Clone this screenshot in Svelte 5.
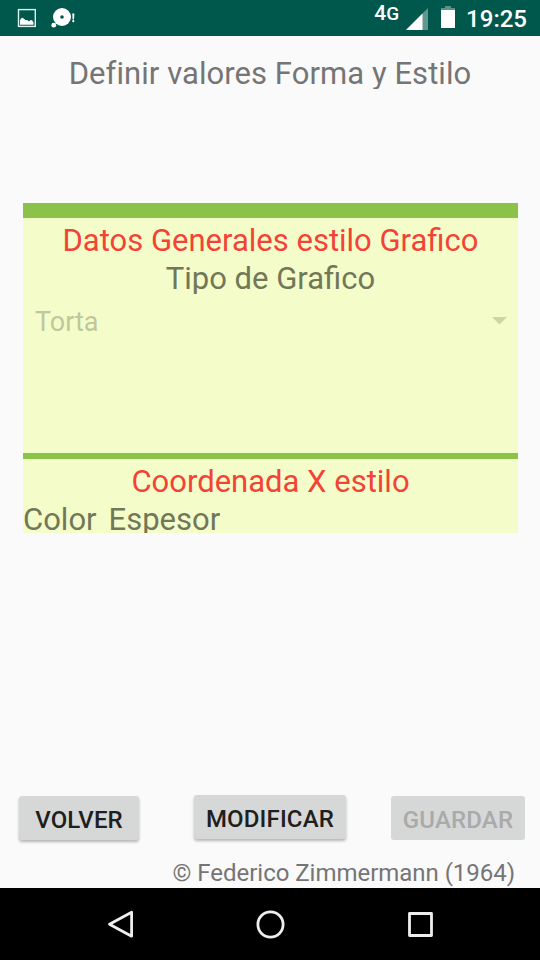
<script>
  let tipo = "Torta"

  const columnas = ["Color", "Espesor"]

  const botones = [
    { id: "volver", texto: "Volver" },
    { id: "modificar", texto: "Modificar" },
    { id: "guardar", texto: "Guardar", inactivo: true },
  ]
</script>

<div class="screen">
  <header class="status">
    <svg class="notifications" width="80" height="36" viewBox="0 0 80 36">
      <rect x="18.5" y="9.6" width="16.8" height="16.8" fill="none" stroke="#d9f5ee" stroke-width="1.4" />
      <path d="M20 24.7v-4.2l1-2 1.6-.7 1.6 1.2 1.5 1.3 1.6-.2 1.6 1.4 1.7-1.6 1.7.7 1.2 2v2.1z" fill="#fff" />
      <circle cx="62" cy="17" r="9" fill="#fff" />
      <circle cx="62" cy="17" r="1.8" fill="#00574b" />
      <circle cx="53.8" cy="25.2" r="2.4" fill="#fff" />
      <path d="M72.2 13.5h2.2l-.4 6h-1.4z" fill="#fff" />
      <circle cx="73.3" cy="21.2" r="1.1" fill="#fff" />
    </svg>
    <div class="system">
      <span class="network">4<small>G</small></span>
      <svg class="signal" width="22" height="22" viewBox="0 0 22 22">
        <path d="M0 22L22 0v22z" fill="#fff" opacity="0.38" />
        <path d="M0 22L16.5 5.5V22z" fill="#fff" />
      </svg>
      <svg class="battery" width="14" height="22" viewBox="0 0 14 22">
        <path d="M4 0h6v2h4v2H0V2h4z" fill="#fff" opacity="0.35" />
        <path d="M0 4h14v18H0z" fill="#fff" />
      </svg>
      <span class="clock">19:25</span>
    </div>
  </header>

  <main>
    <h1>Definir valores Forma y Estilo</h1>

    <div class="panel">
      <section class="general">
        <h2 class="datos">Datos Generales estilo Grafico</h2>
        <p class="label">Tipo de Grafico</p>
        <div class="spinner">
          <span>{tipo}</span>
          <svg width="15" height="8" viewBox="0 0 15 8">
            <path d="M0 0h15L7.5 7.5z" fill="#cdd5a6" />
          </svg>
        </div>
      </section>
      <section class="coordenada">
        <h2>Coordenada X estilo</h2>
        <div class="columns">
          {#each columnas as columna}
            <span>{columna}</span>
          {/each}
        </div>
      </section>
    </div>

    <div class="buttons">
      {#each botones as boton}
        <button class={boton.id} disabled={boton.inactivo}>{boton.texto}</button>
      {/each}
    </div>
    <footer>© Federico Zimmermann (1964)</footer>
  </main>

  <nav>
    <svg width="30" height="30" viewBox="0 0 30 30">
      <path d="M26.6 3.2v24L4.5 15.2z" />
    </svg>
    <svg width="30" height="30" viewBox="0 0 30 30">
      <circle cx="15.5" cy="15.5" r="12.6" />
    </svg>
    <svg width="30" height="30" viewBox="0 0 30 30">
      <rect x="4.5" y="4.5" width="22" height="22" />
    </svg>
  </nav>
</div>

<style>
  :global(body) {
    background: #fafafa;
  }

  .screen {
    width: 540px;
    height: 960px;
    display: flex;
    flex-direction: column;
    overflow: hidden;
    font-family: Roboto, sans-serif;
    color: #757575;
    background: #fafafa;
    white-space: nowrap;
  }

  .status {
    height: 36px;
    flex: none;
    display: flex;
    justify-content: space-between;
    color: #fff;
    background: #00574b;
  }

  .system {
    display: flex;
    align-items: flex-start;
    padding-right: 13px;
  }

  .network {
    margin-right: 7px;
    font-size: 21px;
    font-weight: 500;
    line-height: 26px;
  }

  .network small {
    font-size: 19px;
  }

  .signal {
    margin: 8px 13px 0 0;
  }

  .battery {
    margin: 6px 11px 0 0;
  }

  .clock {
    font-size: 24px;
    font-weight: 500;
    line-height: 38px;
  }

  main {
    flex: 1;
    display: flex;
    flex-direction: column;
  }

  h1,
  h2,
  .label {
    margin: 0;
    font-size: 31px;
    font-weight: 400;
    line-height: 38px;
    text-align: center;
  }

  h1 {
    height: 34px;
    margin-top: 19px;
    overflow: hidden;
    letter-spacing: 0.06px;
  }

  .panel {
    height: 330px;
    margin: 114px 22px 0 23px;
    overflow: hidden;
    background: #f4fdca;
  }

  .general {
    box-sizing: border-box;
    height: 250px;
    padding-top: 4px;
    border-top: 15px solid #8bc34a;
  }

  .coordenada {
    padding-top: 4px;
    border-top: 6px solid #8bc34a;
  }

  h2 {
    color: #f44336;
  }

  .label,
  .columns {
    color: #717757;
  }

  .label {
    height: 34px;
    overflow: hidden;
  }

  .spinner {
    display: flex;
    align-items: center;
    justify-content: space-between;
    height: 36px;
    margin-top: 10px;
    padding: 0 11px 0 12px;
    font-size: 27px;
    color: #c0c79b;
  }

  .spinner svg {
    margin-bottom: 2px;
  }

  .columns {
    display: flex;
    gap: 12px;
    font-size: 31px;
    line-height: 38px;
  }

  .buttons {
    display: flex;
    align-items: flex-start;
    margin: 262px 15px 0 19px;
  }

  button {
    height: 44px;
    margin: 1px 0 0;
    padding: 3px 0 0;
    border: 0;
    border-radius: 3px;
    font: 500 24px Roboto, sans-serif;
    letter-spacing: 0.15px;
    text-transform: uppercase;
    color: #1e2020;
    background: #d6d7d7;
    box-shadow: 0 2px 3px rgba(0, 0, 0, 0.28);
  }

  button:disabled {
    color: #a9aaaa;
    box-shadow: none;
  }

  .volver {
    width: 120px;
  }

  .modificar {
    width: 152px;
    margin: 0 45px 0 55px;
  }

  .guardar {
    width: 134px;
  }

  footer {
    margin: 18px 25px 0 0;
    font-size: 24px;
    line-height: 30px;
    letter-spacing: -0.03px;
    text-align: right;
  }

  nav {
    flex: none;
    height: 72px;
    display: flex;
    align-items: center;
    justify-content: center;
    gap: 120px;
    background: #000;
  }

  nav svg {
    fill: none;
    stroke: #eee;
    stroke-width: 2.8;
    stroke-linejoin: round;
  }
</style>
